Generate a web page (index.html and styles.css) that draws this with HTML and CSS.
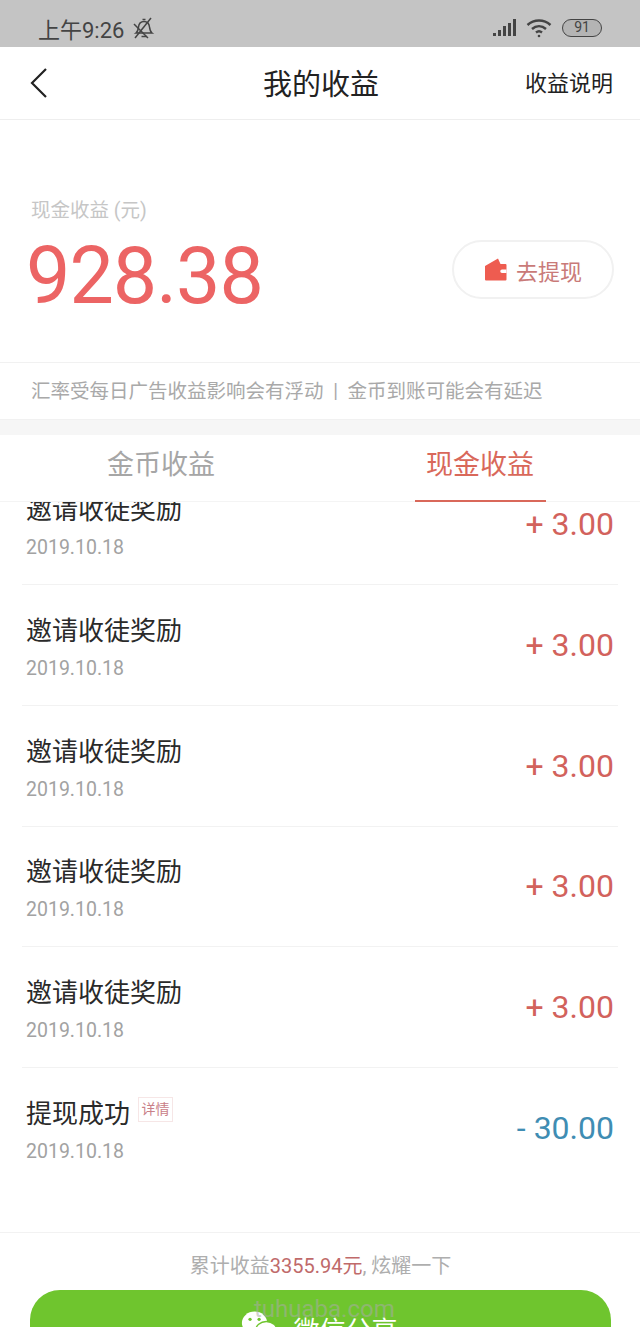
FILE: index.html
```html
<!DOCTYPE html>
<html lang="zh-CN">
<head>
    <meta charset="UTF-8">
    <meta name="viewport" content="width=device-width, initial-scale=1.0">
    <title>我的收益</title>
    <link rel="stylesheet" href="styles.css">
</head>
<body>
    <div class="pagina">
        <div class="status">
            <div class="status-esq">
                <span>上午9:26</span>
                <svg class="sino" width="24" height="24" viewBox="0 0 24 24" fill="none" stroke="#444" stroke-width="1.500">
                    <path d="M4 17c2-1.500 2.200-3.500 2.500-6C6.900 7.500 9 5.500 12 5.500s5.100 2 5.500 5.500c.3 2.500.5 4.500 2.500 6z"/>
                    <path d="M9.500 20.500h5"/>
                    <path d="M10.500 3.500h3"/>
                    <path d="M2 8l14 14"/>
                    <path d="M3 22L19 2"/>
                </svg>
            </div>
            <div class="status-dir">
                <svg width="26" height="20" viewBox="0 0 26 20" fill="#444">
                    <rect x="0" y="15" width="3" height="3"/>
                    <rect x="5" y="12" width="3" height="6"/>
                    <rect x="10" y="8" width="3" height="10"/>
                    <rect x="15" y="5" width="3" height="13"/>
                    <rect x="20" y="1" width="3" height="17"/>
                </svg>
                <svg width="26" height="20" viewBox="0 0 26 20" fill="none" stroke="#444" stroke-width="2.400">
                    <path d="M1.500 7c6.500-6 16.500-6 23 0"/>
                    <path d="M6 11c4.200-3.800 9.800-3.800 14 0"/>
                    <path d="M10 14.500c1.800-1.500 4.200-1.500 6 0"/>
                    <circle cx="13" cy="18" r="1.300" fill="#444" stroke="none"/>
                </svg>
                <div class="bateria">91</div>
            </div>
        </div>

        <div class="nav">
            <svg class="voltar" width="20" height="32" viewBox="0 0 20 32" fill="none" stroke="#222" stroke-width="2.200">
                <path d="M17 2L3 16l14 14"/>
            </svg>
            <div class="nav-titulo">我的收益</div>
            <div class="nav-link">收益说明</div>
        </div>

        <div class="resumo">
            <div>
                <div class="resumo-label">现金收益 (元)</div>
                <div class="resumo-valor">928.38</div>
            </div>
            <div class="botao-sacar">
                <svg width="23" height="23" viewBox="0 0 23 23">
                    <path fill="#ee5c50" d="M1 8L14 .5l2.500 5.500h5a1 1 0 0 1 1 1v14.500a1 1 0 0 1-1 1H2a1 1 0 0 1-1-1z"/>
                    <path fill="#fff" d="M18 11.500h4.500v3.500H18a1.750 1.750 0 0 1 0-3.500z"/>
                </svg>
                <span>去提现</span>
            </div>
        </div>

        <div class="aviso">汇率受每日广告收益影响会有浮动 &nbsp;|&nbsp; 金币到账可能会有延迟</div>

        <div class="abas">
            <div class="aba">金币收益</div>
            <div class="aba ativa">现金收益</div>
        </div>

        <div class="lista">
            <div class="lista-rolagem">
                <div class="item">
                    <div class="item-info">
                        <div class="item-titulo">邀请收徒奖励</div>
                        <div class="item-data">2019.10.18</div>
                    </div>
                    <div class="item-valor">+ 3.00</div>
                </div>
                <div class="item">
                    <div class="item-info">
                        <div class="item-titulo">邀请收徒奖励</div>
                        <div class="item-data">2019.10.18</div>
                    </div>
                    <div class="item-valor">+ 3.00</div>
                </div>
                <div class="item">
                    <div class="item-info">
                        <div class="item-titulo">邀请收徒奖励</div>
                        <div class="item-data">2019.10.18</div>
                    </div>
                    <div class="item-valor">+ 3.00</div>
                </div>
                <div class="item">
                    <div class="item-info">
                        <div class="item-titulo">邀请收徒奖励</div>
                        <div class="item-data">2019.10.18</div>
                    </div>
                    <div class="item-valor">+ 3.00</div>
                </div>
                <div class="item">
                    <div class="item-info">
                        <div class="item-titulo">邀请收徒奖励</div>
                        <div class="item-data">2019.10.18</div>
                    </div>
                    <div class="item-valor">+ 3.00</div>
                </div>
                <div class="item">
                    <div class="item-info">
                        <div class="item-titulo">提现成功 <span class="tag">详情</span></div>
                        <div class="item-data">2019.10.18</div>
                    </div>
                    <div class="item-valor saida">- 30.00</div>
                </div>
            </div>
        </div>

        <div class="rodape">
            <div class="rodape-texto">累计收益<span class="destaque">3355.94元</span>, 炫耀一下</div>
            <div class="botao-wx">
                <svg width="38" height="33" viewBox="0 0 42 36">
                    <ellipse cx="15" cy="14" rx="14" ry="12.500" fill="#fff"/>
                    <ellipse cx="28" cy="23" rx="12" ry="10.500" fill="#fff" stroke="#6fc52e" stroke-width="1.500"/>
                    <circle cx="10" cy="10" r="1.800" fill="#6fc52e"/>
                    <circle cx="20" cy="10" r="1.800" fill="#6fc52e"/>
                    <circle cx="24" cy="20" r="1.500" fill="#6fc52e"/>
                    <circle cx="32" cy="20" r="1.500" fill="#6fc52e"/>
                </svg>
                <span class="botao-wx-texto">微信分享</span>
            </div>
            <div class="marca">tuhuaba.com</div>
        </div>
    </div>
</body>
</html>
```

FILE: styles.css
```css
* {
    box-sizing: border-box;
}
body {
    margin: 0;
    font-family: Roboto, "Noto Sans CJK SC", sans-serif;
    background-color: #fff;
}
.pagina {
    width: 640px;
    height: 1327px;
    overflow: hidden;
    display: flex;
    flex-direction: column;
}

/* barra de status */
.status {
    height: 47px;
    flex: none;
    background-color: #c4c4c4;
    display: flex;
    justify-content: space-between;
    align-items: center;
    padding: 15px 38px 6px 38px;
    color: #444;
}
.status-esq {
    display: flex;
    align-items: center;
    gap: 8px;
    font-size: 22px;
}
.status-dir {
    display: flex;
    align-items: center;
    gap: 7px;
}
.bateria {
    width: 40px;
    height: 18px;
    border: 1.500px solid #444;
    border-radius: 9px;
    background-color: #b4b4b4;
    font-size: 14px;
    line-height: 15px;
    text-align: center;
    margin-left: 3px;
}

/* topo */
.nav {
    height: 73px;
    flex: none;
    background-color: #fff;
    border-bottom: 1px solid #eee;
    display: grid;
    grid-template-columns: 1fr auto 1fr;
    align-items: center;
    padding: 0 27px 1px 29px;
}
.voltar {
    display: block;
}
.nav-titulo {
    font-size: 29px;
    color: #222;
    padding-bottom: 2px;
}
.nav-link {
    font-size: 22px;
    color: #222;
    justify-self: end;
    padding-bottom: 3px;
}

/* resumo */
.resumo {
    height: 243px;
    flex: none;
    display: flex;
    justify-content: space-between;
    align-items: flex-start;
    padding: 77px 26px 0 26px;
    border-bottom: 1px solid #f1f1f1;
}
.resumo-label {
    font-size: 19.500px;
    line-height: 28px;
    color: #c6c6c6;
    padding-left: 5px;
}
.resumo-valor {
    font-size: 79px;
    letter-spacing: -1px;
    line-height: 90px;
    color: #ec6464;
    margin-top: 6px;
}
.botao-sacar {
    width: 162px;
    height: 59px;
    margin-top: 43px;
    border: 2px solid #f1f1f1;
    border-radius: 30px;
    display: flex;
    align-items: center;
    justify-content: center;
    gap: 9px;
    font-size: 22px;
    color: #c97a78;
}

.aviso {
    height: 57px;
    flex: none;
    padding: 0 31px;
    line-height: 58px;
    font-size: 19.500px;
    color: #a9a9a9;
    border-bottom: 1px solid #f1f1f1;
}

/* abas */
.abas {
    height: 82px;
    flex: none;
    border-top: 15px solid #f6f6f6;
    border-bottom: 1px solid #f4f4f4;
    display: grid;
    grid-template-columns: 1fr 1fr;
}
.aba {
    font-size: 27px;
    color: #a6a6a6;
    text-align: center;
    line-height: 60px;
    height: 67px;
    width: 268px;
    justify-self: center;
}
.aba:first-child {
    margin-left: 2px;
}
.aba.ativa {
    width: 131px;
    color: #d9685a;
    border-bottom: 2px solid #d9685a;
    white-space: nowrap;
}

/* lista */
.lista {
    height: 730px;
    flex: none;
    overflow: hidden;
}
.lista-rolagem {
    margin-top: -37.500px;
}
.item {
    height: 120.700px;
    margin: 0 22px;
    padding: 0 4px;
    border-bottom: 1px solid #f2f2f2;
    display: flex;
    justify-content: space-between;
    align-items: center;
}
.item:last-child {
    border-bottom: none;
}
.item-info {
    padding-top: 5px;
}
.item-titulo {
    font-size: 26px;
    line-height: 36px;
    color: #2a2a2a;
    display: flex;
    align-items: flex-start;
    gap: 8px;
}
.item-data {
    font-size: 19.500px;
    line-height: 26px;
    color: #a2a2a2;
    margin-top: 7px;
}
.item-valor {
    font-size: 32px;
    color: #d2625c;
}
.item-valor.saida {
    color: #3f8db3;
}
.tag {
    font-size: 14px;
    line-height: 23px;
    width: 35px;
    height: 25px;
    text-align: center;
    color: #c98088;
    border: 1px solid #f6e6e6;
    margin-top: 1px;
}

/* rodape */
.rodape {
    flex: 1;
    position: relative;
    border-top: 1px solid #f2f2f2;
    padding: 20px 29px 0 30px;
}
.rodape-texto {
    font-size: 20px;
    line-height: 27px;
    color: #aeaeae;
    text-align: center;
}
.destaque {
    color: #c06a6a;
}
.botao-wx {
    height: 70px;
    margin-top: 10px;
    border-radius: 30px;
    background-color: #6fc52e;
    display: flex;
    justify-content: center;
    align-items: flex-start;
    gap: 14px;
    padding-top: 20px;
    padding-right: 2px;
    color: #fff;
    font-size: 26px;
    line-height: 36px;
}
.botao-wx-texto {
    margin-top: 3px;
}
.marca {
    position: absolute;
    left: 254px;
    top: 62px;
    font-size: 24px;
    color: rgba(170, 170, 170, 0.55);
}
```
